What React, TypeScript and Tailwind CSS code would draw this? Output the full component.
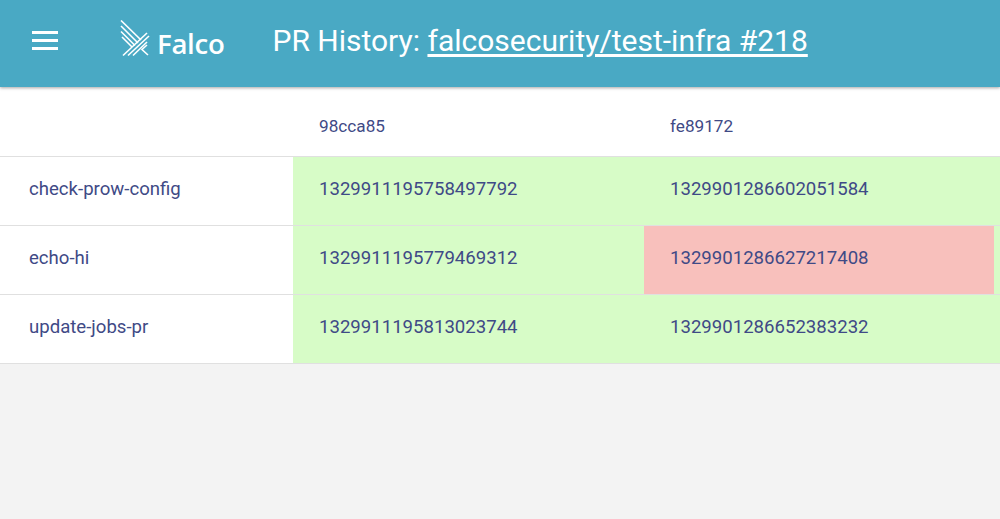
import React from 'react';

const commits = ['98cca85', 'fe89172'];

const rows = [
  { name: 'check-prow-config', cells: [['1329911195758497792', 'ok'], ['1329901286602051584', 'ok']] },
  { name: 'echo-hi', cells: [['1329911195779469312', 'ok'], ['1329901286627217408', 'fail']] },
  { name: 'update-jobs-pr', cells: [['1329911195813023744', 'ok'], ['1329901286652383232', 'ok']] },
];

const FalcoMark = () => (
  <svg width="30" height="37" viewBox="0 0 30 37" fill="none" stroke="white" strokeWidth="1.6" className="block">
    <path d="M1 0.5 L21 20" />
    <path d="M1 6 L18 23" />
    <path d="M1 11.5 L15 25.5" />
    <path d="M2 17 L12 27" />
    <path d="M3 35.5 L27 13" />
    <path d="M8 35.5 L29 16" />
    <path d="M13 35.5 L27 22" />
    <path d="M27 25 L22 29.5 L28 35" />
  </svg>
);

export default function App() {
  return (
    <div className="min-h-[519px] bg-[#f3f3f3] font-['Roboto',sans-serif] text-[#3f4a86]">
      <header className="relative z-10 flex h-[87px] items-center bg-[#49a9c4] pb-[6px] text-white shadow-[0_1px_3px_rgba(0,0,0,0.35)]">
        <div className="ml-[32px] flex w-[26px] flex-col gap-[5px]">
          <span className="h-[3px] bg-white" />
          <span className="h-[3px] bg-white" />
          <span className="h-[3px] bg-white" />
        </div>
        <div className="mb-[5px] ml-[62px] flex items-end">
          <FalcoMark />
          <span className="ml-[7px] font-['Open_Sans',sans-serif] text-[27.6px] leading-[28px] font-semibold tracking-[-0.3px]">Falco</span>
        </div>
        <h1 className="ml-[48px] text-[30px] font-normal">
          PR History: <span className="underline underline-offset-[3px]">falcosecurity/test-infra #218</span>
        </h1>
      </header>
      <table className="w-full table-fixed border-collapse bg-white text-[18.6px]">
        <colgroup>
          <col className="w-[293px]" />
          <col className="w-[351px]" />
          <col className="w-[350px]" />
          <col />
        </colgroup>
        <thead>
          <tr className="h-[69px] border-b border-[#e0e0e0]">
            <th />
            {commits.map((c) => (
              <th key={c} className="pt-[11px] pl-[26px] text-left text-[17.2px] font-normal">{c}</th>
            ))}
            <th />
          </tr>
        </thead>
        <tbody>
          {rows.map((r) => (
            <tr key={r.name} className="h-[69px] border-b border-[#e0e0e0]">
              <td className="pb-[1px] pl-[29px]">{r.name}</td>
              {r.cells.map(([id, state]) => (
                <td key={id} className={state === 'ok' ? 'bg-[#d7fcc7] pb-[1px] pl-[26px]' : 'bg-[#f8c0bc] pb-[1px] pl-[26px]'}>{id}</td>
              ))}
              <td className="bg-[#d7fcc7]" />
            </tr>
          ))}
        </tbody>
      </table>
    </div>
  );
}
